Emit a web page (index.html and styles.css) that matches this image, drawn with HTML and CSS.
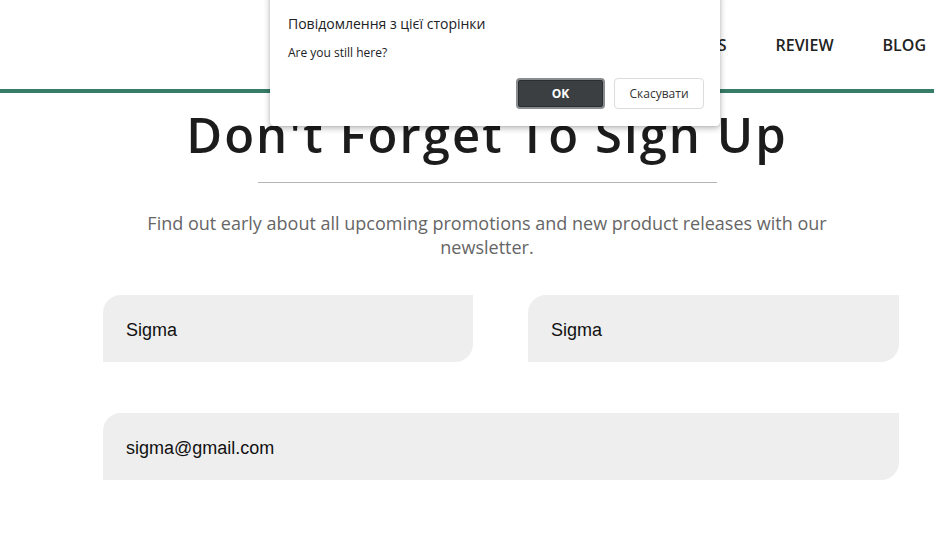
FILE: index.html
```html
<!DOCTYPE html>
<html lang="uk">
<head>
<meta charset="utf-8">
<title>Sign Up</title>
<link rel="stylesheet" href="styles.css">
</head>
<body>
<header class="header">
  <nav class="nav">
    <a class="nav-link" href="#">HOME</a>
    <a class="nav-link" href="#">ABOUT</a>
    <a class="nav-link" href="#">PRODUCTS</a>
    <a class="nav-link" href="#">REVIEW</a>
    <a class="nav-link" href="#">BLOG</a>
  </nav>
</header>
<main class="signup">
  <div class="intro">
    <h1 class="title">Don't Forget To Sign Up</h1>
    <hr class="rule">
    <p class="lead">Find out early about all upcoming promotions and new product releases with our newsletter.</p>
  </div>
  <form class="form">
    <input class="field" type="text" value="Sigma">
    <input class="field" type="text" value="Sigma">
    <input class="field field-wide" type="email" value="sigma@gmail.com">
  </form>
</main>
<div class="dialog" role="dialog">
  <div class="dialog-title">Повідомлення з цієї сторінки</div>
  <div class="dialog-msg">Are you still here?</div>
  <div class="dialog-actions">
    <button class="btn btn-ok" type="button">OK</button>
    <button class="btn btn-cancel" type="button">Скасувати</button>
  </div>
</div>
</body>
</html>
```
FILE: styles.css
```css
* { box-sizing: border-box; }
html, body { margin: 0; padding: 0; background: #fff; }
body { font-family: "Open Sans", "Noto Sans", sans-serif; color: #222; overflow: hidden; height: 537px; }

.header {
  height: 93px;
  border-bottom: 4px solid #367c66;
  display: flex;
  justify-content: flex-end;
}
.nav {
  display: flex;
  align-items: flex-start;
  gap: 0 49px;
  padding: 34px 8px 0 0;
}
.nav-link {
  font-size: 16px;
  font-weight: 600;
  color: #222;
  text-decoration: none;
  letter-spacing: 0;
  line-height: 22px;
}

.signup { padding: 0; }
.intro {
  padding-left: 40px;
  text-align: center;
}
.title {
  margin: 8px 0 0;
  font-family: "Open Sans", sans-serif;
  font-weight: 600;
  font-size: 49px;
  letter-spacing: 2.05px;
  line-height: 66px;
  color: #1c1c1c;
}
.rule {
  width: 459px;
  margin: 15px auto 0;
  border: 0;
  border-top: 1px solid #b5b5b5;
  height: 0;
}
.lead {
  margin: 28px auto 0;
  width: 700px;
  font-size: 18px;
  line-height: 24px;
  color: #666;
}
.form {
  margin: 36px 0 0 103px;
  width: 796px;
  display: grid;
  grid-template-columns: 370px 371px;
  column-gap: 55px;
  row-gap: 51px;
}
.field {
  height: 67px;
  border: 0;
  outline: 0;
  background: #eeeeee;
  border-radius: 18px 0 18px 0;
  padding: 4px 23px 0;
  font-family: "Liberation Sans", Arial, sans-serif;
  font-size: 18px;
  color: #111;
}
.field-wide { grid-column: 1 / 3; }

.dialog {
  position: absolute;
  left: 270px;
  top: -6px;
  width: 450px;
  height: 132px;
  background: #fff;
  border-radius: 0 0 4px 4px;
  box-shadow: 0 2px 6px rgba(0,0,0,0.3), 0 0 1px rgba(0,0,0,0.3);
  padding: 20px 16px 0 18px;
  font-family: "Open Sans", "Noto Sans", sans-serif;
}
.dialog-title {
  font-size: 14px;
  color: #202124;
  line-height: 20px;
  margin-top: 0;
}
.dialog-msg {
  font-size: 12px;
  color: #202124;
  line-height: 16px;
  margin-top: 11px;
}
.dialog-actions {
  display: flex;
  justify-content: flex-end;
  gap: 9px;
  margin-top: 17px;
}
.btn {
  height: 31px;
  border-radius: 4px;
  font-family: "Open Sans", "Noto Sans", sans-serif;
  font-size: 12px;
  padding: 0;
  cursor: pointer;
}
.btn-ok {
  width: 89px;
  background: #3c3f42;
  color: #fff;
  font-weight: 700;
  border: 2px solid #8a8d90;
  box-shadow: inset 0 0 0 1px #2b2d30;
}
.btn-cancel {
  width: 90px;
  background: #fff;
  color: #333;
  border: 1px solid #dadce0;
}
```
